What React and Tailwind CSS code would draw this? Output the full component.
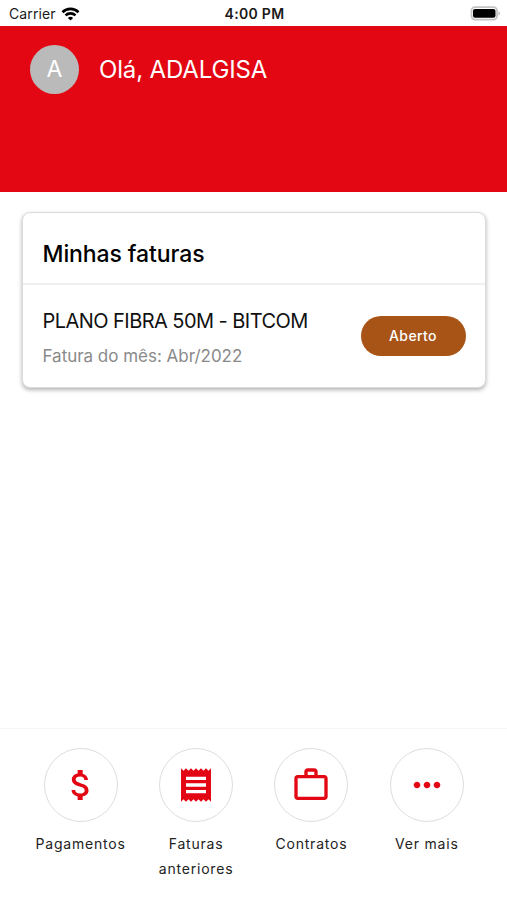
import React from 'react'
import { MdAttachMoney, MdReceipt, MdWorkOutline, MdMoreHoriz } from 'react-icons/md'

const actions = [
  { label: 'Pagamentos', icon: MdAttachMoney },
  { label: 'Faturas anteriores', icon: MdReceipt },
  { label: 'Contratos', icon: MdWorkOutline },
  { label: 'Ver mais', icon: MdMoreHoriz },
]

const StatusBar = () => (
  <div className="grid h-[25.5px] grid-cols-3 items-center bg-white pt-[2px] pl-[9px] pr-[7px] text-[14px] leading-4 text-[#1a1a1a]">
    <div className="flex items-center gap-[5px]">
      <span className="tracking-[0.1px]">Carrier</span>
      {/* Wifi */}
      <svg className="h-[14px] w-[19px]" viewBox="0 0 18 14" fill="none" stroke="#000" strokeWidth="2.6">
        <path d="M1 5.2a11.4 11.4 0 0 1 16 0" />
        <path d="M4 8.4a7.1 7.1 0 0 1 10 0" />
        <path d="M9 13.6 6.4 10.9a3.8 3.8 0 0 1 5.2 0z" fill="#000" stroke="none" />
      </svg>
    </div>
    <span className="text-center font-semibold tracking-[0.3px]">4:00 PM</span>
    {/* Battery */}
    <svg className="h-[15px] w-[30px] justify-self-end" viewBox="0 0 30 15">
      <rect x="1.5" y="1.2" width="25.5" height="12.4" rx="3.5" fill="#fff" stroke="#c4c4c4" strokeWidth="1.8" />
      <rect x="3" y="3" width="22.5" height="8.8" rx="2" fill="#000" />
      <path d="M28.4 5.4c1.2.4 1.6 1.2 1.6 2.1s-.4 1.7-1.6 2.1z" fill="#c4c4c4" />
    </svg>
  </div>
)

const Header = () => (
  <header className="flex h-[166px] items-start bg-[#e30613] pt-[19px] pl-[30px] text-white">
    <div className="flex items-center gap-5">
      <div className="flex size-[49px] items-center justify-center rounded-full bg-[#bababa] pt-px text-[23px]">
        A
      </div>
      <h1 className="pt-[2px] text-[24px] leading-8 tracking-[-0.15px]">Olá, ADALGISA</h1>
    </div>
  </header>
)

const InvoiceCard = () => (
  <section className="mr-[21px] ml-[22px] mt-[20.5px] h-[176px] rounded-lg border-[1.5px] border-[#d9dbdc] bg-white shadow-[0_2px_4px_rgba(0,0,0,0.3)]">
    <h2 className="flex h-[72px] items-center border-b-2 border-[#f0f0f0] px-[19.5px] pt-[13px] text-[23px] font-medium tracking-[-0.1px] text-black">
      Minhas faturas
    </h2>
    <div className="flex items-center justify-between pt-[20px] pr-[19.5px] pl-[19.5px]">
      <div>
        <p className="text-[20px] leading-8 tracking-[-0.55px] text-[#111]">PLANO FIBRA 50M - BITCOM</p>
        <p className="mt-[5px] text-[17px] leading-7 tracking-[-0.02px] text-[#8a8a8a]">Fatura do mês: Abr/2022</p>
      </div>
      <span className="mb-1 flex h-10 w-[105px] items-center justify-center rounded-full bg-[#a85417] text-[14px] font-medium tracking-[0.4px] text-white">
        Aberto
      </span>
    </div>
  </section>
)

const ActionButton = ({ label, icon: Icon }) => (
  <div className="flex w-[115.4px] flex-col items-center">
    <div className="flex size-[74px] items-center justify-center rounded-full border border-[#dedede] text-[#e30613]">
      <Icon className="size-10" />
    </div>
    <span className="mt-[10px] w-24 text-center text-[14px] leading-[24.5px] tracking-[0.8px] text-[#222]">{label}</span>
  </div>
)

export default function App() {
  return (
    <div className="flex h-[900px] w-[507px] flex-col overflow-hidden bg-white font-['Inter',sans-serif]">
      <StatusBar />
      <Header />
      <InvoiceCard />
      <nav className="mt-auto flex h-[172px] justify-center border-t-[1.5px] border-[#f5f5f5] pt-[19px] pl-[0.5px]">
        {actions.map((action) => (
          <ActionButton key={action.label} {...action} />
        ))}
      </nav>
    </div>
  )
}
